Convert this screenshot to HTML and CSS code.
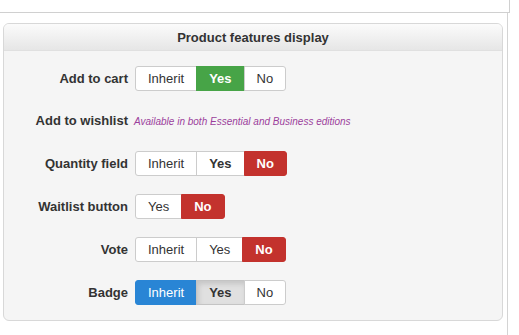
FILE: index.html
```html
<!DOCTYPE html>
<html lang="en">
<head>
    <meta charset="UTF-8">
    <meta name="viewport" content="width=device-width, initial-scale=1.0">
    <title>Product features display</title>
    <link rel="stylesheet" href="styles.css">
</head>
<body>

    <!-- Top strip -->
    <div class="topbar"></div>

    <!-- Content -->
    <div class="content">
        <div class="panel">
            <div class="panel-heading">Product features display</div>

            <div class="panel-body">
                <div class="form-row">
                    <label class="row-label">Add to cart</label>
                    <div class="btn-group">
                        <button class="btn">Inherit</button>
                        <button class="btn btn-success">Yes</button>
                        <button class="btn">No</button>
                    </div>
                </div>

                <div class="form-row note-row">
                    <label class="row-label">Add to wishlist</label>
                    <span class="edition-note">Available in both Essential and Business editions</span>
                </div>

                <div class="form-row">
                    <label class="row-label">Quantity field</label>
                    <div class="btn-group">
                        <button class="btn">Inherit</button>
                        <button class="btn strong">Yes</button>
                        <button class="btn btn-danger">No</button>
                    </div>
                </div>

                <div class="form-row">
                    <label class="row-label">Waitlist button</label>
                    <div class="btn-group">
                        <button class="btn">Yes</button>
                        <button class="btn btn-danger">No</button>
                    </div>
                </div>

                <div class="form-row">
                    <label class="row-label">Vote</label>
                    <div class="btn-group">
                        <button class="btn">Inherit</button>
                        <button class="btn">Yes</button>
                        <button class="btn btn-danger">No</button>
                    </div>
                </div>

                <div class="form-row">
                    <label class="row-label">Badge</label>
                    <div class="btn-group">
                        <button class="btn btn-primary">Inherit</button>
                        <button class="btn strong pressed">Yes</button>
                        <button class="btn">No</button>
                    </div>
                </div>
            </div>
        </div>
    </div>

</body>
</html>
```

FILE: styles.css
```css
body {
    font-family: "Liberation Sans", Arial, sans-serif;
    font-size: 13px;
    color: #333;
    background-color: #fff;
    margin: 0;
    padding: 0;
}

.topbar {
    width: 509px;
    height: 12px;
    border-bottom: 1px solid #d0d0d0;
    border-right: 1px solid #d0d0d0;
}

.content {
    width: 507px;
    border-right: 1px solid #d4d4d4;
    padding-top: 10px;
    padding-bottom: 20px;
}

.panel {
    width: 498px;
    margin-left: 3px;
    border: 1px solid #d8d8d8;
    border-radius: 6px;
    background-color: #f5f5f5;
    overflow: hidden;
}

.panel-heading {
    height: 26px;
    line-height: 27px;
    text-align: center;
    font-weight: bold;
    background: linear-gradient(#fbfbfb, #e6e6e6);
    border-bottom: 1px solid #e0e0e0;
}

.panel-body {
    padding: 15px 0 15px 0;
    display: flex;
    flex-direction: column;
    gap: 18px;
}

.form-row {
    display: flex;
    align-items: center;
    gap: 7px;
    height: 25px;
}

.note-row {
    align-items: baseline;
    gap: 6px;
    height: 24px;
    line-height: 24px;
}

.row-label {
    width: 124px;
    text-align: right;
    font-weight: bold;
}

.edition-note {
    font-size: 10px;
    font-style: italic;
    color: #9c3f9c;
}

.btn-group {
    display: flex;
}

.btn {
    font-family: inherit;
    font-size: 13px;
    line-height: 15px;
    padding: 4px 12px;
    margin: 0 0 0 -1px;
    color: #333;
    background-color: #fff;
    border: 1px solid #ccc;
    border-radius: 0;
    cursor: pointer;
}

.btn:first-child {
    margin-left: 0;
    border-radius: 3px 0 0 3px;
}

.btn:last-child {
    border-radius: 0 3px 3px 0;
}

.btn.strong {
    font-weight: bold;
}

.btn.pressed {
    background-color: #e0e0e0;
    border-color: #c4c4c4;
    box-shadow: inset 2px 3px 5px rgba(0, 0, 0, 0.12);
}

.btn-success {
    background-color: #47a447;
    border-color: #47a447;
    color: #fff;
    font-weight: bold;
}

.btn-danger {
    background-color: #c3322d;
    border-color: #c3322d;
    color: #fff;
    font-weight: bold;
}

.btn-primary {
    background-color: #2985d5;
    border-color: #2985d5;
    color: #fff;
}
```
